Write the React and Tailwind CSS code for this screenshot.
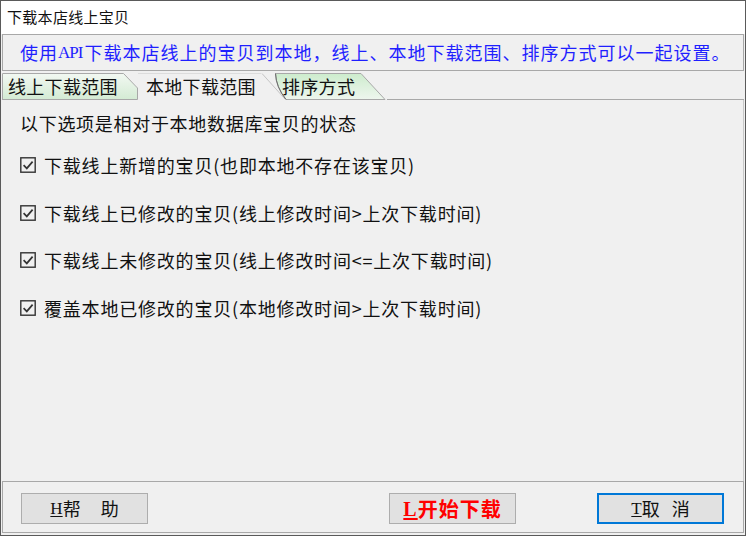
import React from "react";

const cjk = { fontFamily: '"Noto Sans CJK SC", "Noto Sans", sans-serif' };
const serifLatin = { fontFamily: '"Liberation Serif", "Noto Sans CJK SC", serif' };

const options = [
  "下载线上新增的宝贝(也即本地不存在该宝贝)",
  "下载线上已修改的宝贝(线上修改时间>上次下载时间)",
  "下载线上未修改的宝贝(线上修改时间<=上次下载时间)",
  "覆盖本地已修改的宝贝(本地修改时间>上次下载时间)",
];

// little checked box, looks like the ☑ glyph of the original
const CheckGlyph = () => (
  <svg width="16" height="16" viewBox="0 0 16 16" className="shrink-0">
    <rect x="0.8" y="0.8" width="14.4" height="14.4" fill="none" stroke="#333" strokeWidth="1.4" />
    <polyline points="3.6,8.2 6.8,11.4 12.6,4.6" fill="none" stroke="#333" strokeWidth="1.7" />
  </svg>
);

const App = () => {
  return (
    <div
      className="w-[746px] h-[536px] bg-[#f0f0f0] border border-[#5a5a5a] flex flex-col overflow-hidden text-[#111]"
      style={cjk}
    >
      {/* title bar */}
      <div className="h-[33px] bg-white flex items-center pl-[6px] text-[15px] tracking-[0.3px]">
        下载本店线上宝贝
      </div>

      {/* info box */}
      <div className="h-[37px] mx-[1px] border border-[#a8a8a8] flex items-center pl-[17px] text-[18px] text-[#1f1fff] whitespace-nowrap tracking-[1px]">
        <span>使用</span>
        <span className="text-[17px] tracking-[-1px] mr-[2px]" style={serifLatin}>API</span>
        <span>下载本店线上的宝贝到本地，线上、本地下载范围、排序方式可以一起设置。</span>
      </div>

      {/* tabs */}
      <div className="h-[29px] flex items-end">
        <div className="relative w-[136px] h-[27px] ml-[1px] shrink-0">
          <svg width="136" height="27" className="absolute inset-0">
            <defs>
              <linearGradient id="t1" x1="0" y1="0" x2="0" y2="1">
                <stop offset="0" stopColor="#f2f8f2" />
                <stop offset="1" stopColor="#d3ebd3" />
              </linearGradient>
            </defs>
            <path d="M0.5 27 V0.5 H121.5 L135.5 15 V26.5 H0.5" fill="url(#t1)" stroke="#a8a8a8" />
          </svg>
          <div className="relative pl-[6px] h-full flex items-center text-[18px] tracking-[0.3px]">线上下载范围</div>
        </div>
        <div className="relative w-[124px] h-[27px] shrink-0">
          <svg width="124" height="27" className="absolute inset-0">
            <path d="M0 0.5 H123.5" stroke="#dcdcdc" fill="none" />
          </svg>
          <div className="relative pl-[8px] h-full flex items-center text-[18px] tracking-[0.3px]">本地下载范围</div>
        </div>
        <div className="relative w-[125px] h-[27px] shrink-0">
          <svg width="125" height="27" className="absolute inset-0">
            <defs>
              <linearGradient id="t3" x1="0" y1="0" x2="0" y2="1">
                <stop offset="0" stopColor="#cdeccd" />
                <stop offset="1" stopColor="#eef6ee" />
              </linearGradient>
            </defs>
            <path d="M0 0.5 L23 26" stroke="#c4c4c4" fill="none" />
            <path d="M13.5 0.5 H99 L123 26.5 H24 Q14 14 13.5 0.5 Z" fill="url(#t3)" stroke="#a8a8a8" />
            <path d="M13.5 0.5 Q14 14 24 26.5" stroke="#6a6a6a" fill="none" />
          </svg>
          <div className="relative pl-[20px] h-full flex items-center text-[18px] tracking-[0.3px]">排序方式</div>
        </div>
        <div className="flex-1 h-[27px] border-b border-[#a8a8a8] mr-[1px]" />
      </div>

      {/* options panel */}
      <div className="flex-1 pl-[19px] pt-[11px] border-r border-[#c8c8c8] mr-[1px]">
        <div className="text-[18px] leading-[24px] tracking-[0.7px]">以下选项是相对于本地数据库宝贝的状态</div>
        <div className="flex flex-col gap-[23.5px] mt-[18px]">
          {options.map((text) => (
            <div key={text} className="flex items-center gap-[8px] h-[24px]">
              <CheckGlyph />
              <span className="text-[18px] leading-[24px] tracking-[0.8px] whitespace-nowrap">{text}</span>
            </div>
          ))}
        </div>
      </div>

      {/* bottom button bar */}
      <div className="h-[52px] mx-[1px] mb-[2px] border border-[#a8a8a8] flex items-start pt-[11px] pl-[18px]">
        <button className="w-[127px] h-[31px] bg-[#e1e1e1] border border-[#adadad] flex items-center justify-center text-[18px]">
          <span className="underline underline-offset-2 text-[17px]" style={serifLatin}>H</span>
          <span>帮</span>
          <span className="ml-[20px]">助</span>
        </button>
        <button className="w-[127px] h-[31px] ml-[241px] bg-[#e1e1e1] border border-[#adadad] flex items-center justify-center text-[20px] font-bold text-[#ff0000] tracking-[1px]">
          <span className="underline underline-offset-2" style={serifLatin}>L</span>
          <span>开始下载</span>
        </button>
        <button className="w-[127px] h-[31px] ml-[81px] bg-[#e1e1e1] border-2 border-[#0078d7] flex items-center justify-center text-[18px]">
          <span className="underline underline-offset-2 text-[17px]" style={serifLatin}>T</span>
          <span>取</span>
          <span className="ml-[12px]">消</span>
        </button>
      </div>
    </div>
  );
};

export default App;
